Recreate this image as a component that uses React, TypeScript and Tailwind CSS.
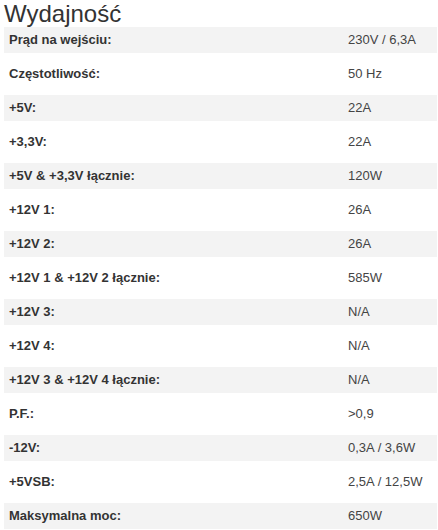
const rows: [string, string][] = [
  ["Prąd na wejściu:", "230V / 6,3A"],
  ["Częstotliwość:", "50 Hz"],
  ["+5V:", "22A"],
  ["+3,3V:", "22A"],
  ["+5V & +3,3V łącznie:", "120W"],
  ["+12V 1:", "26A"],
  ["+12V 2:", "26A"],
  ["+12V 1 & +12V 2 łącznie:", "585W"],
  ["+12V 3:", "N/A"],
  ["+12V 4:", "N/A"],
  ["+12V 3 & +12V 4 łącznie:", "N/A"],
  ["P.F.:", ">0,9"],
  ["-12V:", "0,3A / 3,6W"],
  ["+5VSB:", "2,5A / 12,5W"],
  ["Maksymalna moc:", "650W"],
];

export default function App() {
  return (
    <div className="w-[438px] h-[530px] overflow-hidden bg-white font-['Liberation_Sans',Arial,sans-serif]">
      <h2 className="pl-1 text-[24px] leading-[27px] text-[#333]">Wydajność</h2>
      <div className="flex flex-col gap-2 pl-1 pr-[1px]">
        {rows.map(([label, value], i) => (
          <div
            key={label}
            className={
              i % 2 === 0
                ? "flex h-[26px] items-center bg-[#f3f3f3]"
                : "flex h-[26px] items-center"
            }
          >
            <div className="w-[339px] pl-[5px] text-[13px] font-bold text-[#333]">
              {label}
            </div>
            <div className="pl-[5px] text-[13px] text-[#444]">{value}</div>
          </div>
        ))}
      </div>
    </div>
  );
}
